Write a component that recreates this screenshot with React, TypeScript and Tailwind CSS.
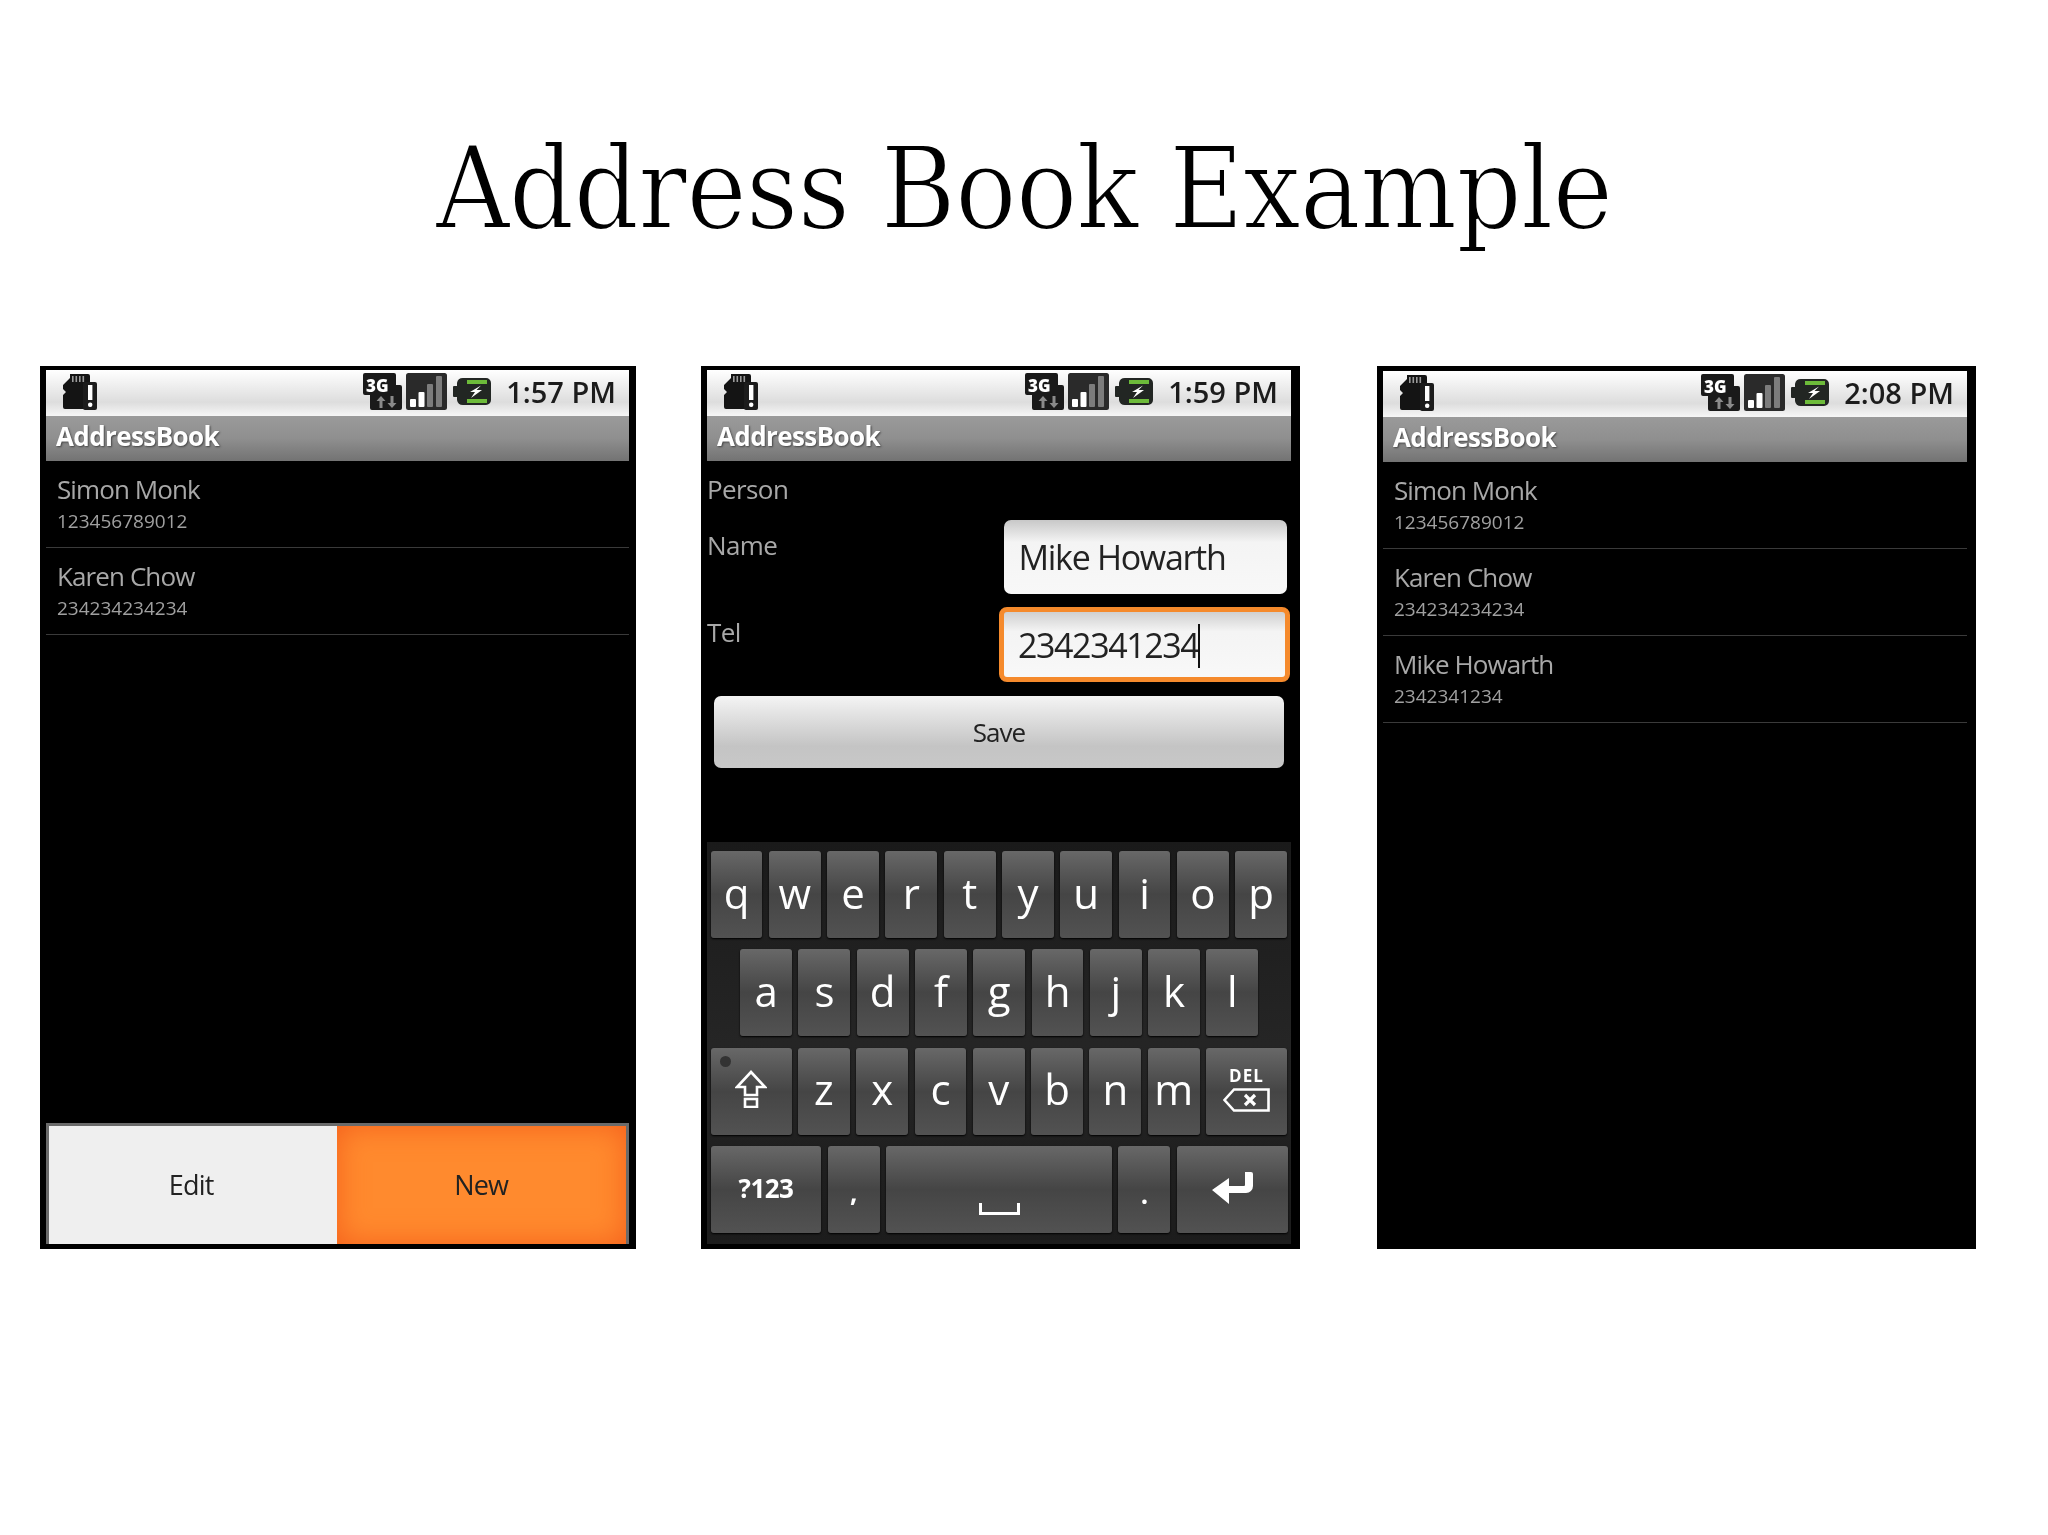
import type { ReactNode } from "react";

const row1 = ["q", "w", "e", "r", "t", "y", "u", "i", "o", "p"];
const row2 = ["a", "s", "d", "f", "g", "h", "j", "k", "l"];
const row3 = ["z", "x", "c", "v", "b", "n", "m"];

function SdIcon() {
  return (
    <svg viewBox="0 0 35 37" className="h-[37px] w-[35px]">
      <path d="M8 1H26a2 2 0 0 1 2 2V36H3a2 2 0 0 1-2-2V22l3-3-3-3V12l7-7Z" fill="#141414" />
      <path d="M10 3h1.6v6H10zM13.5 3h1.6v6h-1.6zM17 3h1.6v6H17zM20.5 3h1.6v6h-1.6z" fill="#9a9a9a" />
      <rect x="21" y="9" width="14" height="28" rx="2" fill="#1c1c1c" />
      <rect x="26" y="12" width="4.4" height="15" fill="#fff" />
      <rect x="26" y="29.5" width="4.4" height="4.4" rx="2" fill="#fff" />
    </svg>
  );
}

function NetworkIcon() {
  return (
    <svg viewBox="0 0 39 37" className="h-[37px] w-[39px]">
      <path d="M2 0H31a2 2 0 0 1 2 2V12h4a2 2 0 0 1 2 2V35a2 2 0 0 1-2 2H9a2 2 0 0 1-2-2V22H2a2 2 0 0 1-2-2V2a2 2 0 0 1 2-2Z" fill="#1a1a1a" />
      <text x="3" y="18.500" fontFamily="Open Sans, sans-serif" fontWeight="800" fontSize="17" fill="#fff">
        3G
      </text>
      <path d="M18 23l-4.500 5h3V35h3V28h3ZM29 35l4.500-5h-3V23h-3v7h-3Z" fill="#8a8a8a" />
    </svg>
  );
}

function SignalIcon() {
  return (
    <svg viewBox="0 0 41 37" className="h-[37px] w-[41px]">
      <rect width="41" height="37" rx="2.5" fill="#2a2a2a" />
      <rect x="4" y="26" width="6" height="8" rx="1" fill="#fff" />
      <rect x="12.500" y="19" width="6" height="15" rx="1" fill="#fff" />
      <rect x="21" y="11" width="6" height="23" rx="1" fill="#7c7c7c" />
      <rect x="30" y="3" width="6" height="31" rx="1" fill="#7c7c7c" />
    </svg>
  );
}

function BatteryIcon() {
  return (
    <svg viewBox="0 0 39 29" className="h-[29px] w-[39px]">
      <path d="M10 1H33a5 5 0 0 1 5 5V23a5 5 0 0 1-5 5H10a6 6 0 0 1-6-5V20H1a1 1 0 0 1-1-1V10a1 1 0 0 1 1-1H4V6a6 6 0 0 1 6-5Z" fill="#222623" />
      <rect x="14" y="3" width="20" height="4" fill="#6dbb3a" />
      <rect x="14" y="22" width="20" height="4" fill="#6dbb3a" />
      <path d="M28 8.500 17 15h5l-4 6 11-8h-5.500Z" fill="#fff" />
    </svg>
  );
}

function StatusBar({ time }: { time: string }) {
  return (
    <div className="flex h-[46px] shrink-0 items-center bg-linear-to-b from-[#ffffff] via-[#dddddd] via-70% to-[#f6f6f6] pb-[3px] pl-[16px] pr-[13px]">
      <SdIcon />
      <div className="ml-auto flex items-center gap-[6px]">
        <NetworkIcon />
        <div className="-ml-[2.600px]">
          <SignalIcon />
        </div>
        <BatteryIcon />
        <span className="ml-[8.600px] text-[29px] font-semibold leading-none text-[#1c1c1c]">{time}</span>
      </div>
    </div>
  );
}

function TitleBar() {
  return (
    <div className="flex h-[45px] shrink-0 items-center bg-linear-to-b from-[#9a9a9a] via-[#8f8f8f] to-[#737373] pb-[4px] pl-[10px] text-[26px] font-bold tracking-[-0.6px] text-white [text-shadow:1px_1px_2px_#444]">
      AddressBook
    </div>
  );
}

function ListRow({ name, tel }: { name: string; tel: string }) {
  return (
    <div className="h-[87px] border-b border-[#3a3a3a] pl-[11px] pt-[12px]">
      <div className="text-[26px] leading-[32px] tracking-[-0.9px] text-[#a8a8a8]">{name}</div>
      <div className="mt-[4px] text-[19px] leading-[24px] text-[#a0a0a0]">{tel}</div>
    </div>
  );
}

function Phone({ width, chrome, time, children }: { width: string; chrome: string; time: string; children: ReactNode }) {
  return (
    <div className={`flex h-[883px] shrink-0 flex-col bg-black blur-[0.5px] ${width} ${chrome}`}>
      <StatusBar time={time} />
      <TitleBar />
      {children}
    </div>
  );
}

function Key({ width, children }: { width: string; children: ReactNode }) {
  return (
    <div
      className={`relative flex h-[87px] shrink-0 items-center justify-center rounded-[3px] bg-linear-to-b from-[#686868] via-[#454545] via-50% to-[#525252] pb-[4px] text-[42px] leading-none text-white shadow-[0_1px_2px_#000] ${width}`}
    >
      {children}
    </div>
  );
}

function Keyboard() {
  return (
    <div className="mt-auto flex h-[402px] flex-col gap-[11.400px] bg-linear-to-b from-[#1a1a1a] via-[#252525] to-[#1c1c1c] pl-[3.600px] pt-[9px]">
      <div className="flex gap-[6.400px]">
        {row1.map((k) => (
          <Key key={k} width="w-[51.900px]">{k}</Key>
        ))}
      </div>
      <div className="ml-[29.600px] flex gap-[6.400px]">
        {row2.map((k) => (
          <Key key={k} width="w-[51.900px]">{k}</Key>
        ))}
      </div>
      <div className="flex gap-[6.400px]">
        <Key width="w-[81px]">
          <span className="absolute left-[9px] top-[8px] size-[11px] rounded-full bg-[#333333]" />
          <svg viewBox="0 0 32 38" className="h-[38px] w-[32px]" fill="none" stroke="#fff" strokeWidth="2.6">
            <path d="M16 2 30 17H22V25H10V17H2Z" />
            <rect x="10" y="29" width="12" height="8" />
          </svg>
        </Key>
        {row3.map((k) => (
          <Key key={k} width="w-[51.900px]">{k}</Key>
        ))}
        <Key width="w-[81px]">
          <div className="flex flex-col items-center gap-[4px]">
            <span className="text-[17px] font-bold leading-[17px] tracking-[1px]">DEL</span>
            <svg viewBox="0 0 47 24" className="h-[24px] w-[47px]" fill="none" stroke="#fff" strokeWidth="2.6">
              <path d="M11 1.500H45.500V22.500H11L1.500 12Z" />
              <path d="M22 7 32 17M32 7 22 17" strokeWidth="3.2" />
            </svg>
          </div>
        </Key>
      </div>
      <div className="flex gap-[6.400px]">
        <Key width="w-[110.800px]">
          <span className="text-[26px] font-bold tracking-[-0.5px]">?123</span>
        </Key>
        <Key width="w-[51.900px]">
          <span className="mt-[8px] text-[26px] font-bold">,</span>
        </Key>
        <Key width="w-[226px]">
          <svg viewBox="0 0 41 12" className="mt-[42px] h-[12px] w-[41px]" fill="none" stroke="#fff" strokeWidth="3">
            <path d="M1.500 0V10.500H39.500V0" />
          </svg>
        </Key>
        <Key width="w-[51.900px]">
          <span className="mt-[12px] text-[26px] font-bold">.</span>
        </Key>
        <Key width="w-[110.800px]">
          <svg viewBox="0 0 41 32" className="h-[32px] w-[41px]" fill="#fff">
            <path d="M33 0h6a2 2 0 0 1 2 2V14a7 7 0 0 1-7 7H17V32L0 18 17 6V14H32a1 1 0 0 0 1-1Z" />
          </svg>
        </Key>
      </div>
    </div>
  );
}

function PersonForm() {
  return (
    <>
      <div className="h-[59px] pt-[12px] text-[26px] leading-[32px] tracking-[-0.6px] text-[#a8a8a8]">Person</div>
      <div className="mb-[13px] flex h-[74px] justify-between pr-[4px]">
        <span className="pt-[9px] text-[26px] leading-[32px] tracking-[-0.6px] text-[#a8a8a8]">Name</span>
        <div className="flex w-[283.500px] items-center rounded-[7px] bg-linear-to-b from-[#c8c8c8] via-[#f4f4f4] via-30% to-[#f8f8f8] pl-[15px] text-[34px] tracking-[-1.3px] text-[#222222]">
          Mike Howarth
        </div>
      </div>
      <div className="mb-[14px] flex h-[75px] justify-between pr-[1px]">
        <span className="pt-[9px] text-[26px] leading-[32px] tracking-[-0.6px] text-[#a8a8a8]">Tel</span>
        <div className="flex w-[291px] items-center rounded-[8px] border-[5px] border-[#f58a2c] bg-linear-to-b from-[#d0d0d0] via-[#f4f4f4] via-30% to-[#f8f8f8] pl-[14px] pt-[2px] text-[34px] tracking-[-1.4px] text-[#222222]">
          2342341234
          <span className="h-[44px] w-[2px] bg-[#111111]" />
        </div>
      </div>
      <div className="mx-[7px] flex h-[72px] items-center justify-center rounded-[7px] bg-linear-to-b from-[#f4f4f4] via-[#c4c4c4] via-70% to-[#c8c8c8] text-[26px] tracking-[-1px] text-[#222222]">
        Save
      </div>
    </>
  );
}

function Menu() {
  return (
    <div className="mt-auto flex h-[121px] border-x-[3px] border-t-[3px] border-[#6a6a6a] text-[27px] tracking-[-0.8px] text-[#222222]">
      <div className="flex w-[287.500px] items-center justify-center bg-[#efefef] pr-[3px]">Edit</div>
      <div className="flex flex-1 items-center justify-center bg-[#ff8a2e] shadow-[inset_0_0_30px_#f5601c]">New</div>
    </div>
  );
}

export default function App() {
  return (
    <div className="h-[1535px] w-[2048px] bg-white font-['Open_Sans',sans-serif]">
      <div className="h-[366px] pt-[129px]">
        <h1 className="text-center font-['DejaVu_Serif',serif] text-[114px] font-normal leading-[120px] tracking-[-1px] text-black [-webkit-text-stroke:2px_#fff] [font-stretch:condensed]">
          Address Book Example
        </h1>
      </div>
      <div className="flex pl-[40px]">
        <Phone width="w-[596px]" chrome="border-b-[5px] border-l-[6px] border-r-[7px] border-t-[4px] border-black" time="1:57 PM">
          <ListRow name="Simon Monk" tel="123456789012" />
          <ListRow name="Karen Chow" tel="234234234234" />
          <Menu />
        </Phone>
        <div className="ml-[65px]">
          <Phone width="w-[599px]" chrome="border-b-[5px] border-l-[6px] border-r-[9px] border-t-[4px] border-black" time="1:59 PM">
            <PersonForm />
            <Keyboard />
          </Phone>
        </div>
        <div className="ml-[77px]">
          <Phone width="w-[599px]" chrome="border-b-[5px] border-l-[6px] border-r-[9px] border-t-[5px] border-black" time="2:08 PM">
            <ListRow name="Simon Monk" tel="123456789012" />
            <ListRow name="Karen Chow" tel="234234234234" />
            <ListRow name="Mike Howarth" tel="2342341234" />
          </Phone>
        </div>
      </div>
    </div>
  );
}
